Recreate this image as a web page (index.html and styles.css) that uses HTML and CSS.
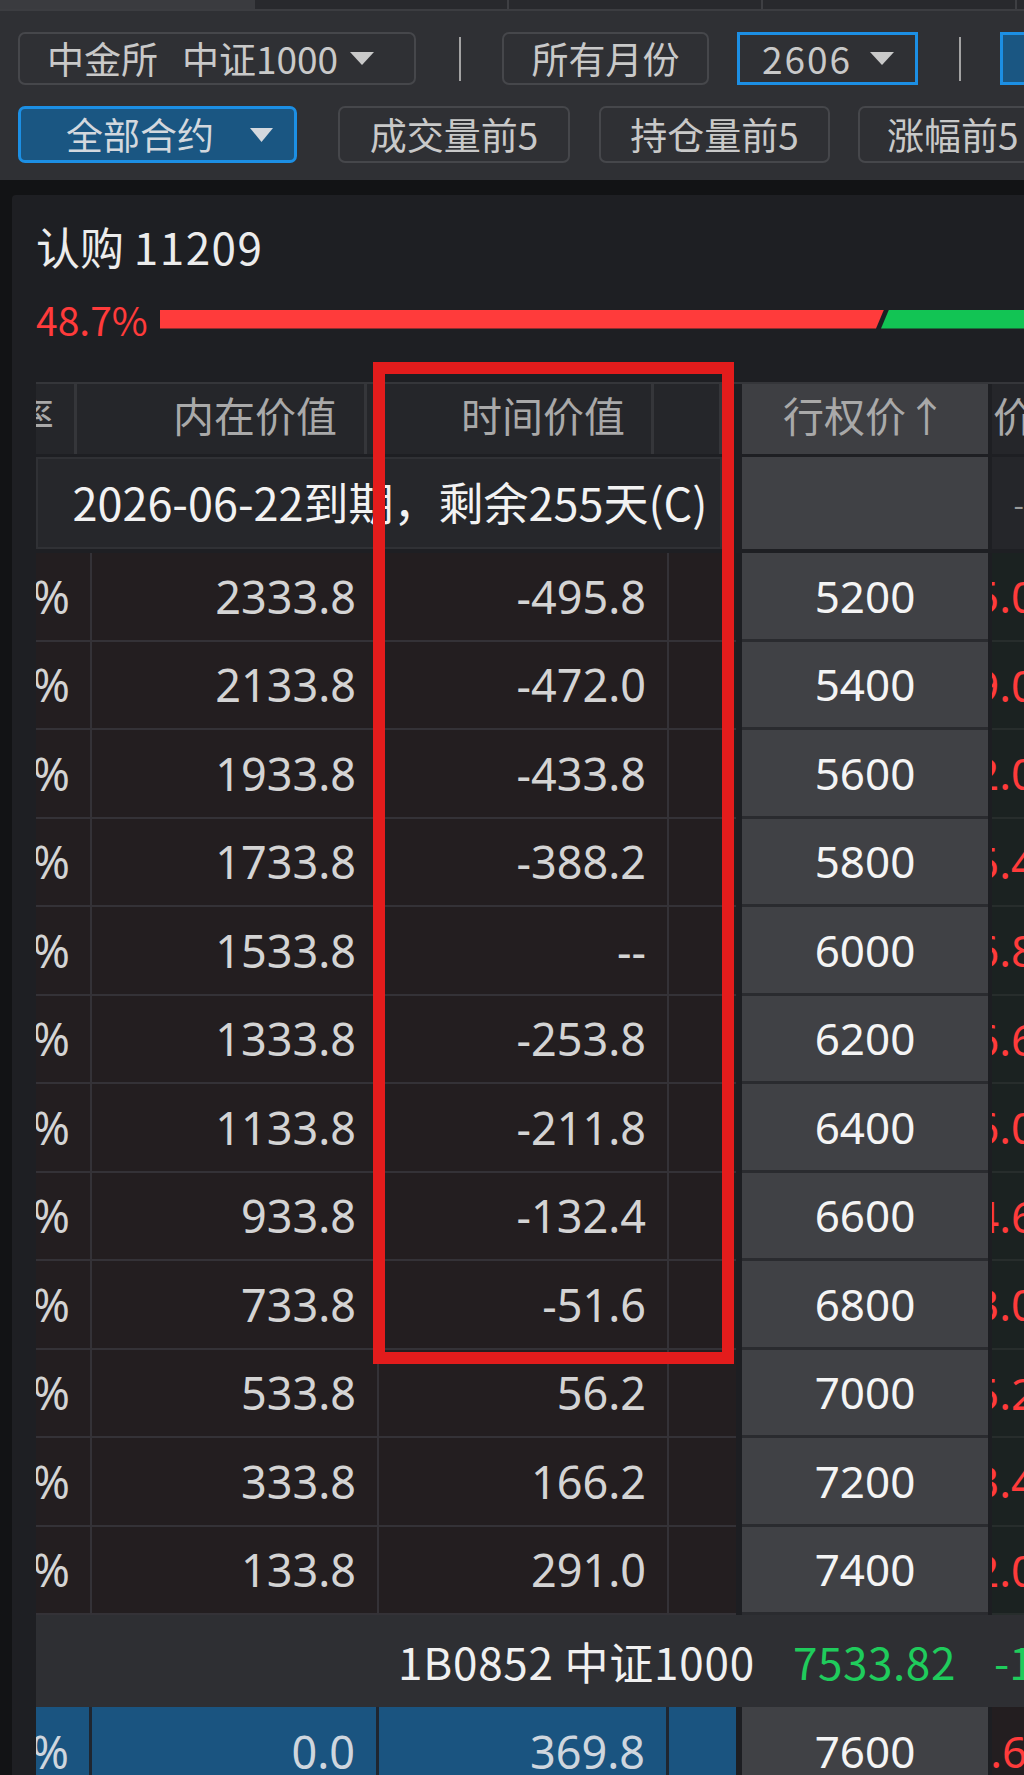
FILE: index.html
```html
<!DOCTYPE html>
<html lang="zh-CN">
<head>
<meta charset="utf-8">
<title>期权T型报价</title>
<link rel="stylesheet" href="styles.css">
</head>
<body>
<div class="tabs">
  <div class="tab tab-first"></div>
  <div class="tab"></div>
  <div class="tab"></div>
  <div class="tab"></div>
</div>

<div class="toolbar">
  <div class="tb-row tb-row1">
    <div class="btn btn-exch"><span>中金所</span><span class="sp-gap">中证1000</span><svg class="arrow" width="24" height="13" viewBox="0 0 24 13"><polygon points="0,0 24,0 12,13"/></svg></div>
    <div class="vsep"></div>
    <div class="btn btn-month">所有月份</div>
    <div class="btn btn-code"><span class="num">2606</span><svg class="arrow" width="24" height="13" viewBox="0 0 24 13"><polygon points="0,0 24,0 12,13"/></svg></div>
    <div class="vsep vsep2"></div>
    <div class="btn btn-more"></div>
  </div>
  <div class="tb-row tb-row2">
    <div class="btn btn-all"><span>全部合约</span><svg class="arrow" width="23" height="14" viewBox="0 0 23 14"><polygon points="0,0 23,0 11.5,14"/></svg></div>
    <div class="btn btn-vol">成交量前5</div>
    <div class="btn btn-oi">持仓量前5</div>
    <div class="btn btn-up">涨幅前5</div>
  </div>
</div>

<div class="panel">
  <div class="title">认购 <span class="title-num">11209</span></div>
  <div class="ratio">
    <span class="ratio-label">48.7%</span>
    <div class="bar-red"></div>
    <div class="bar-green"></div>
  </div>

  <div class="thead">
    <div class="h h0"><span>变化率</span></div>
    <div class="h h1">内在价值</div>
    <div class="h h2">时间价值</div>
    <div class="h h3"></div>
    <div class="hgap"></div>
    <div class="h hs">行权价↑</div>
    <div class="hgap2"></div>
    <div class="h h5"><span>价格</span></div>
  </div>

  <div class="texp">
    <div class="e-main">2026-06-22到期，剩余255天(C)</div>
    <div class="hgap"></div>
    <div class="e-strike"></div>
    <div class="hgap2"></div>
    <div class="e-right">-</div>
  </div>

  <div class="tbody">
    <div class="tr"><div class="c ca">%</div><div class="c cb">2333.8</div><div class="c cc">-495.8</div><div class="c cd"></div><div class="g1"></div><div class="s">5200</div><div class="g2"></div><div class="r"><span>5.05</span></div></div>
    <div class="tr"><div class="c ca">%</div><div class="c cb">2133.8</div><div class="c cc">-472.0</div><div class="c cd"></div><div class="g1"></div><div class="s">5400</div><div class="g2"></div><div class="r"><span>9.04</span></div></div>
    <div class="tr"><div class="c ca">%</div><div class="c cb">1933.8</div><div class="c cc">-433.8</div><div class="c cd"></div><div class="g1"></div><div class="s">5600</div><div class="g2"></div><div class="r"><span>2.03</span></div></div>
    <div class="tr"><div class="c ca">%</div><div class="c cb">1733.8</div><div class="c cc">-388.2</div><div class="c cd"></div><div class="g1"></div><div class="s">5800</div><div class="g2"></div><div class="r"><span>5.41</span></div></div>
    <div class="tr"><div class="c ca">%</div><div class="c cb">1533.8</div><div class="c cc">--</div><div class="c cd"></div><div class="g1"></div><div class="s">6000</div><div class="g2"></div><div class="r"><span>6.82</span></div></div>
    <div class="tr"><div class="c ca">%</div><div class="c cb">1333.8</div><div class="c cc">-253.8</div><div class="c cd"></div><div class="g1"></div><div class="s">6200</div><div class="g2"></div><div class="r"><span>6.63</span></div></div>
    <div class="tr"><div class="c ca">%</div><div class="c cb">1133.8</div><div class="c cc">-211.8</div><div class="c cd"></div><div class="g1"></div><div class="s">6400</div><div class="g2"></div><div class="r"><span>6.07</span></div></div>
    <div class="tr"><div class="c ca">%</div><div class="c cb">933.8</div><div class="c cc">-132.4</div><div class="c cd"></div><div class="g1"></div><div class="s">6600</div><div class="g2"></div><div class="r"><span>4.62</span></div></div>
    <div class="tr"><div class="c ca">%</div><div class="c cb">733.8</div><div class="c cc">-51.6</div><div class="c cd"></div><div class="g1"></div><div class="s">6800</div><div class="g2"></div><div class="r"><span>3.05</span></div></div>
    <div class="tr"><div class="c ca">%</div><div class="c cb">533.8</div><div class="c cc">56.2</div><div class="c cd"></div><div class="g1"></div><div class="s">7000</div><div class="g2"></div><div class="r"><span>5.23</span></div></div>
    <div class="tr"><div class="c ca">%</div><div class="c cb">333.8</div><div class="c cc">166.2</div><div class="c cd"></div><div class="g1"></div><div class="s">7200</div><div class="g2"></div><div class="r"><span>3.44</span></div></div>
    <div class="tr"><div class="c ca">%</div><div class="c cb">133.8</div><div class="c cc">291.0</div><div class="c cd"></div><div class="g1"></div><div class="s">7400</div><div class="g2"></div><div class="r"><span>2.06</span></div></div>
  </div>

  <div class="index-row">
    <span class="idx-name">1B0852 中证1000</span>
    <span class="idx-price">7533.82</span>
    <span class="idx-chg">-1</span>
  </div>

  <div class="tr tr-sel">
    <div class="c ca">%</div><div class="c cb">0.0</div><div class="c cc">369.8</div><div class="c cd"></div><div class="g1"></div><div class="s">7600</div><div class="g2"></div><div class="r r-sel"><span>0.65</span></div>
  </div>
</div>

<div class="mark"></div>
</body>
</html>
```

FILE: styles.css
```css
html, body {
  margin: 0;
  padding: 0;
}

body {
  position: relative;
  width: 1024px;
  height: 1775px;
  overflow: hidden;
  background: #121315;
  font-family: "Noto Sans CJK SC", "Noto Sans", sans-serif;
}

/* top tab strip */
.tabs {
  display: flex;
  height: 9px;
  background: #28292d;
  border-bottom: 2px solid #3c3d41;
}
.tab {
  width: 252px;
  border-right: 2px solid #3e3f43;
}
.tab-first {
  width: 255px;
  background: #3a3b3f;
  border-right: 0;
}

/* toolbar */
.toolbar {
  background: #2f3034;
  height: 169px;
  box-sizing: border-box;
  padding: 21px 0 0 18px;
  overflow: hidden;
}
.tb-row {
  display: flex;
  align-items: center;
  white-space: nowrap;
}
.tb-row1 { height: 53px; }
.tb-row2 { height: 57px; margin-top: 21px; }

.btn {
  box-sizing: border-box;
  height: 100%;
  display: flex;
  align-items: center;
  flex-shrink: 0;
  border: 2px solid #46474b;
  border-radius: 7px;
  color: #c9c9c9;
  font-size: 37px;
  line-height: 1;
}
.arrow { fill: #c9c9c9; flex-shrink: 0; }

.btn-exch { width: 398px; padding-left: 27px; }
.btn-exch .sp-gap { margin-left: 24px; }
.btn-exch .arrow { margin-left: 12px; }

.vsep {
  width: 2px;
  height: 44px;
  background: #a3a3a3;
  margin-left: 43px;
  flex-shrink: 0;
}
.vsep2 { margin-left: 41px; }

.btn-month { width: 207px; margin-left: 41px; justify-content: center; }
.btn-code {
  width: 181px;
  margin-left: 28px;
  padding-left: 22px;
  border: 3px solid #1c8fe4;
  border-radius: 0;
}
.btn-code .num { letter-spacing: 2px; }
.btn-code .arrow { margin-left: 18px; }
.btn-more {
  width: 60px;
  margin-left: 39px;
  border: 3px solid #1c8fe4;
  border-radius: 0;
  background: #1a5682;
}

.btn-all {
  width: 279px;
  padding-left: 45px;
  background: #1a5682;
  border: 3px solid #1c8fe4;
  border-radius: 7px;
  color: #d3d8de;
}
.btn-all .arrow { margin-left: 36px; fill: #d3d8de; }
.btn-vol { width: 232px; margin-left: 41px; justify-content: center; }
.btn-oi { width: 231px; margin-left: 29px; justify-content: center; }
.btn-up { width: 200px; margin-left: 28px; padding-left: 27px; }

/* panel */
.panel {
  margin: 15px 0 0 12px;
  padding-left: 24px;
  height: 1580px;
  background: #1e1f23;
  border-radius: 4px 0 0 0;
  overflow: hidden;
}

.title {
  margin-top: 27px;
  height: 48px;
  line-height: 48px;
  font-size: 44px;
  color: #ececec;
  white-space: nowrap;
}
.title-num { letter-spacing: 1.5px; }

.ratio {
  display: flex;
  align-items: center;
  margin-top: 29px;
  height: 40px;
  white-space: nowrap;
}
.ratio-label {
  width: 124px;
  flex-shrink: 0;
  font-size: 39px;
  line-height: 40px;
  color: #ff3b3b;
}
.bar-red {
  width: 724px;
  height: 19px;
  flex-shrink: 0;
  background: #ff3b3b;
  clip-path: polygon(0 0, 100% 0, calc(100% - 8px) 100%, 0 100%);
}
.bar-green {
  width: 200px;
  height: 19px;
  flex-shrink: 0;
  margin-left: -3px;
  background: #12c454;
  clip-path: polygon(8px 0, 100% 0, 100% 100%, 0 100%);
}

/* header row */
.thead {
  display: flex;
  margin-top: 43px;
  height: 72px;
  box-sizing: border-box;
  border-top: 2px solid #35363a;
  background: #25262a;
  white-space: nowrap;
}
.h {
  box-sizing: border-box;
  height: 100%;
  display: flex;
  align-items: center;
  justify-content: flex-end;
  flex-shrink: 0;
  overflow: hidden;
  padding-bottom: 10px;
  font-size: 41px;
  line-height: 1;
  color: #a9a9a9;
  border-right: 3px solid #35363a;
}
.h0 { width: 41px; padding-right: 20px; }
.h1 { width: 290px; padding-right: 27px; }
.h2 { width: 287px; padding-right: 26px; }
.h3 { width: 68px; }
.hgap { width: 20px; flex-shrink: 0; background: #1e1f23; }
.hgap2 { width: 4px; flex-shrink: 0; background: #1e1f23; }
.hs {
  width: 246px;
  justify-content: center;
  background: #3e3f43;
  border-right: 0;
}
.h5 {
  flex: 1;
  justify-content: flex-start;
  border-right: 0;
  padding-left: 1px;
}

/* expiry row */
.texp {
  display: flex;
  height: 92px;
  margin-top: 3px;
  white-space: nowrap;
}
.e-main {
  box-sizing: border-box;
  width: 686px;
  flex-shrink: 0;
  border: 2px solid #303135;
  background: #26272b;
  display: flex;
  align-items: center;
  justify-content: center;
  padding-left: 22px;
  padding-bottom: 4px;
  font-size: 45px;
  line-height: 1;
  color: #f2f2f2;
}
.e-strike {
  width: 246px;
  flex-shrink: 0;
  background: #404145;
}
.e-right {
  flex: 1;
  background: #25262a;
  color: #9a9a9a;
  font-size: 30px;
  display: flex;
  align-items: center;
  justify-content: flex-end;
}

/* data rows */
.tbody { margin-top: 4px; }
.tr {
  display: flex;
  height: 88.5px;
  white-space: nowrap;
}
.c {
  box-sizing: border-box;
  height: 100%;
  flex-shrink: 0;
  overflow: hidden;
  display: flex;
  align-items: center;
  justify-content: flex-end;
  padding-right: 21px;
  background: #231e20;
  border-right: 2px solid #343237;
  border-bottom: 2px solid #343237;
  font-family: "Noto Sans", "Open Sans", sans-serif;
  font-size: 45px;
  line-height: 1;
  color: #d4d4d4;
}
.ca { width: 56px; padding-right: 20px; }
.cb { width: 287px; }
.cc { width: 290px; }
.cd { width: 67px; border-right: 0; }
.g1 { width: 6px; flex-shrink: 0; background: #1d1e22; }
.g2 { width: 4px; flex-shrink: 0; background: #1d1e22; }
.s {
  box-sizing: border-box;
  width: 246px;
  flex-shrink: 0;
  height: 100%;
  display: flex;
  align-items: center;
  justify-content: center;
  background: #404145;
  border-bottom: 3px solid #2a2b2f;
  font-family: "Noto Sans", "Open Sans", sans-serif;
  font-size: 44px;
  line-height: 1;
  color: #f4f4f4;
}
.r {
  box-sizing: border-box;
  flex: 1;
  height: 100%;
  overflow: hidden;
  display: flex;
  align-items: center;
  background: #1b2221;
  border-bottom: 2px solid #272d2c;
  font-family: "Noto Sans", "Open Sans", sans-serif;
  font-size: 44px;
  line-height: 1;
  color: #ff3b3b;
}
.r span { margin-left: -18px; }

/* index row */
.index-row {
  height: 92px;
  display: flex;
  align-items: center;
  background: #2e2f33;
  padding-left: 362px;
  white-space: nowrap;
  font-size: 44px;
  line-height: 1;
}
.idx-name { color: #f0f0f0; flex-shrink: 0; letter-spacing: 0.8px; }
.idx-price { color: #1fcc5c; margin-left: 38px; flex-shrink: 0; letter-spacing: 0.6px; }
.idx-chg { color: #1fcc5c; margin-left: 38px; flex-shrink: 0; }

/* selected row */
.tr-sel .c {
  background: #1a5480;
  border-right: 3px solid #1f2630;
  border-bottom: 0;
  color: #cfd6de;
}
.tr-sel .cd { border-right: 0; }
.tr-sel .s { border-bottom: 0; }
.r-sel { background: #231e20; border-bottom: 0; }
.r-sel span { margin-left: -27px; }

/* annotation box */
.mark {
  position: absolute;
  left: 373px;
  top: 362px;
  width: 361px;
  height: 1002px;
  box-sizing: border-box;
  border: 12px solid #e31c1c;
}
```
